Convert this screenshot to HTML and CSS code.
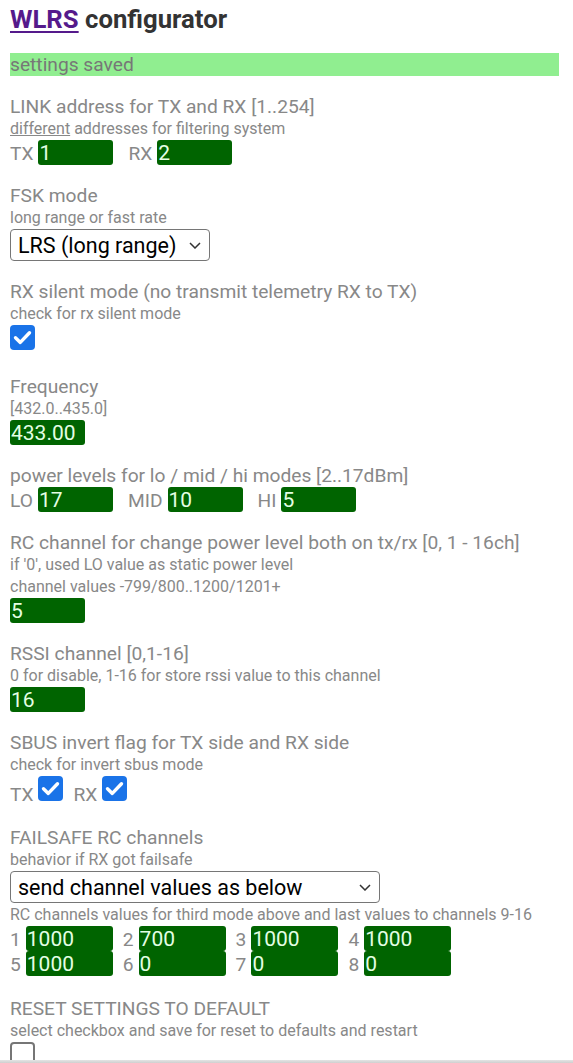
FILE: index.html
```html
<!DOCTYPE html>
<html lang="en">
<head>
<meta charset="utf-8">
<title>WLRS configurator</title>
<link rel="stylesheet" href="styles.css">
</head>
<body>
<h1 class="title"><a href="#" class="brand">WLRS</a> configurator</h1>
<div class="notice">settings saved</div>

<form class="form">
  <section class="field">
    <div class="label">LINK address for TX and RX [1..254]</div>
    <div class="hint"><u>different</u> addresses for filtering system</div>
    <div class="row">
      <span class="pair"><span class="tag">TX</span><input class="num" type="text" value="1"></span>
      <span class="pair"><span class="tag">RX</span><input class="num" type="text" value="2"></span>
    </div>
  </section>

  <section class="field">
    <div class="label">FSK mode</div>
    <div class="hint">long range or fast rate</div>
    <span class="select-wrap select-short">
      <select class="select"><option>LRS (long range)</option><option>fast rate</option></select>
      <svg class="chevron" viewBox="0 0 12 7" width="12" height="7"><polyline points="1,1 6,6 11,1" fill="none" stroke="#333" stroke-width="1.5"/></svg>
    </span>
  </section>

  <section class="field">
    <div class="label">RX silent mode (no transmit telemetry RX to TX)</div>
    <div class="hint">check for rx silent mode</div>
    <div class="checkrow">
      <span class="check on"><svg viewBox="0 0 25 25" width="25" height="25"><polyline points="5.5,12.8 10.3,17.4 19.5,7.8" fill="none" stroke="#fff" stroke-width="3.4" stroke-linecap="round" stroke-linejoin="round"/></svg></span>
    </div>
  </section>

  <section class="field">
    <div class="label">Frequency</div>
    <div class="hint">[432.0..435.0]</div>
    <div class="row">
      <input class="num" type="text" value="433.00">
    </div>
  </section>

  <section class="field">
    <div class="label">power levels for lo / mid / hi modes [2..17dBm]</div>
    <div class="row">
      <span class="pair"><span class="tag">LO</span><input class="num" type="text" value="17"></span>
      <span class="pair"><span class="tag">MID</span><input class="num" type="text" value="10"></span>
      <span class="pair"><span class="tag">HI</span><input class="num" type="text" value="5"></span>
    </div>
  </section>

  <section class="field">
    <div class="label">RC channel for change power level both on tx/rx [0, 1 - 16ch]</div>
    <div class="hint">if '0', used LO value as static power level</div>
    <div class="hint">channel values -799/800..1200/1201+</div>
    <div class="row">
      <input class="num" type="text" value="5">
    </div>
  </section>

  <section class="field">
    <div class="label">RSSI channel [0,1-16]</div>
    <div class="hint">0 for disable, 1-16 for store rssi value to this channel</div>
    <div class="row">
      <input class="num" type="text" value="16">
    </div>
  </section>

  <section class="field">
    <div class="label">SBUS invert flag for TX side and RX side</div>
    <div class="hint">check for invert sbus mode</div>
    <div class="checkrow">
      <span class="tag">TX</span><span class="check on"><svg viewBox="0 0 25 25" width="25" height="25"><polyline points="5.5,12.8 10.3,17.4 19.5,7.8" fill="none" stroke="#fff" stroke-width="3.4" stroke-linecap="round" stroke-linejoin="round"/></svg></span>
      <span class="tag tag-gap">RX</span><span class="check on"><svg viewBox="0 0 25 25" width="25" height="25"><polyline points="5.5,12.8 10.3,17.4 19.5,7.8" fill="none" stroke="#fff" stroke-width="3.4" stroke-linecap="round" stroke-linejoin="round"/></svg></span>
    </div>
  </section>

  <section class="field">
    <div class="label">FAILSAFE RC channels</div>
    <div class="hint">behavior if RX got failsafe</div>
    <span class="select-wrap select-long">
      <select class="select"><option>send channel values as below</option><option>hold last values</option><option>no signal</option></select>
      <svg class="chevron" viewBox="0 0 12 7" width="12" height="7"><polyline points="1,1 6,6 11,1" fill="none" stroke="#333" stroke-width="1.5"/></svg>
    </span>
    <div class="hint hint-after">RC channels values for third mode above and last values to channels 9-16</div>
    <div class="channels">
      <div class="chrow">
        <span class="pair"><span class="tag">1</span><input class="num wide" type="text" value="1000"></span>
        <span class="pair"><span class="tag">2</span><input class="num wide" type="text" value="700"></span>
        <span class="pair"><span class="tag">3</span><input class="num wide" type="text" value="1000"></span>
        <span class="pair"><span class="tag">4</span><input class="num wide" type="text" value="1000"></span>
      </div>
      <div class="chrow">
        <span class="pair"><span class="tag">5</span><input class="num wide" type="text" value="1000"></span>
        <span class="pair"><span class="tag">6</span><input class="num wide" type="text" value="0"></span>
        <span class="pair"><span class="tag">7</span><input class="num wide" type="text" value="0"></span>
        <span class="pair"><span class="tag">8</span><input class="num wide" type="text" value="0"></span>
      </div>
    </div>
  </section>

  <section class="field">
    <div class="label">RESET SETTINGS TO DEFAULT</div>
    <div class="hint">select checkbox and save for reset to defaults and restart</div>
    <div class="checkrow">
      <span class="check"></span>
    </div>
  </section>
</form>
<div class="navbar"></div>
</body>
</html>
```

FILE: styles.css
```css
html, body {
  background: #fff;
}

body {
  margin: 0;
  padding: 4px 14px 0 10px;
  font-family: Roboto, "Noto Sans", sans-serif;
  color: #888;
}

.title {
  margin: 0;
  font-size: 25.7px;
  line-height: 30px;
  font-weight: 700;
  color: #333;
}

.brand {
  color: #551a8b;
  text-decoration: underline;
  text-decoration-thickness: 2px;
  text-underline-offset: 3px;
}

.notice {
  margin-top: 19px;
  height: 23px;
  background: #90ee90;
  color: #777;
  font-size: 19.2px;
  line-height: 23px;
}

.form {
  display: flex;
  flex-direction: column;
}

.field {
  margin-top: 19px;
}

.label {
  font-size: 19.2px;
  line-height: 23px;
  color: #888;
}

.hint {
  font-size: 16px;
  line-height: 22px;
  color: #888;
}

.hint-after {
  margin-top: 1px;
}

.hint u {
  text-decoration-thickness: 1px;
}

.row {
  display: flex;
  align-items: baseline;
  gap: 15px;
  font-size: 19.2px;
  line-height: 23px;
}

.pair {
  display: inline-flex;
  align-items: baseline;
  gap: 5px;
}

.tag {
  font-size: 19.2px;
  line-height: 23px;
  color: #888;
}

.num {
  box-sizing: border-box;
  width: 75px;
  height: 25px;
  margin: 0;
  padding: 0 1px;
  border: none;
  border-radius: 3px;
  background: #006400;
  color: #e4ffe4;
  font-family: Roboto, "Noto Sans", sans-serif;
  font-size: 21px;
  outline: none;
}

.num.wide {
  width: 87px;
}

.select-wrap {
  position: relative;
  display: block;
}

.select-short {
  width: 200px;
}

.select-long {
  width: 370px;
}

.select {
  -webkit-appearance: none;
  appearance: none;
  box-sizing: border-box;
  display: block;
  width: 100%;
  height: 32px;
  margin: 0;
  padding: 0 24px 0 7px;
  border: 1px solid #767676;
  border-radius: 4px;
  background: #fff;
  color: #000;
  font-family: Roboto, "Noto Sans", sans-serif;
  font-size: 21.5px;
}

.chevron {
  position: absolute;
  right: 9px;
  top: 13px;
}

.checkrow {
  font-size: 16px;
  line-height: 22px;
}

.checkrow .tag {
  font-size: 19.2px;
}

.check {
  display: inline-block;
  box-sizing: border-box;
  width: 25px;
  height: 25px;
  border: 2px solid #767676;
  border-radius: 4px;
  background: #fff;
  vertical-align: baseline;
}

.check.on {
  border: none;
  background: #1a73e8;
}

.check svg {
  display: block;
}

.checkrow .tag + .check {
  margin-left: 5px;
}

.tag-gap {
  margin-left: 6px;
}

.channels {
  display: flex;
  flex-direction: column;
  margin-bottom: 2px;
}

.chrow {
  display: flex;
  align-items: baseline;
  gap: 10px;
  height: 25px;
}

.navbar {
  position: fixed;
  left: 0;
  right: 0;
  bottom: 0;
  height: 3px;
  background: linear-gradient(#e4e4e4, #cfcfcf);
}
```
